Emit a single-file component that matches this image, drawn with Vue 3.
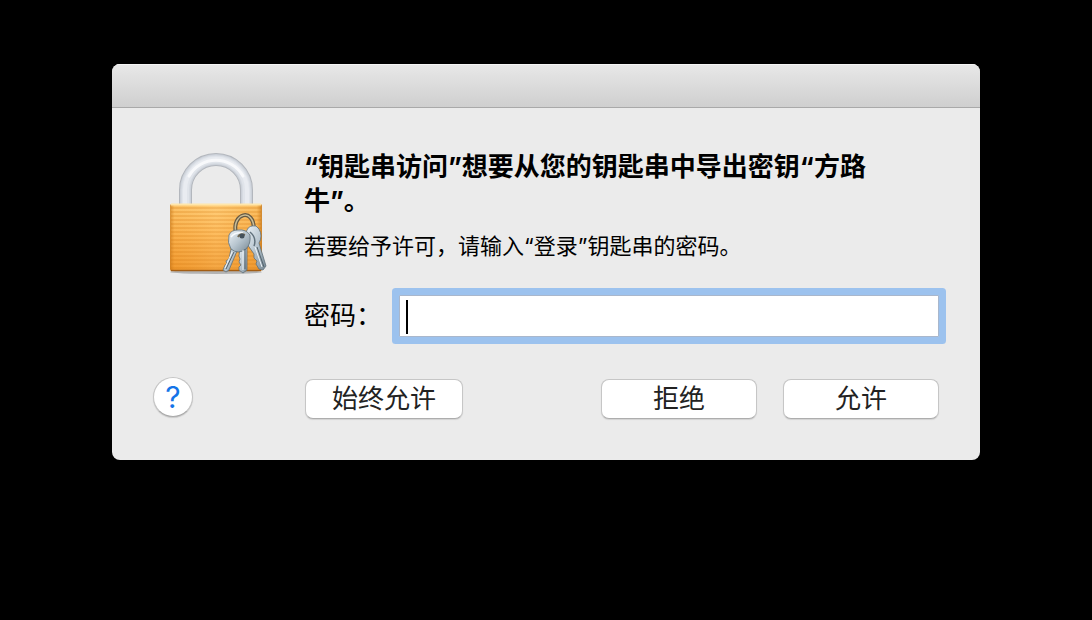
<script setup>
import { ref } from 'vue'

const password = ref('')
const ribs = Array.from({ length: 16 }, (_, i) => 60 + i * 4)
</script>

<template>
  <main class="screen">
    <form class="dialog" role="dialog" aria-labelledby="heading" @submit.prevent>
      <div class="titlebar"></div>
      <div class="content">
        <div class="icon-cell">
          <svg class="lock" viewBox="0 2 106 128" aria-hidden="true">
            <defs>
              <linearGradient id="brass" x1="0" x2="0" y1="0" y2="1">
                <stop offset="0" stop-color="#ffcb73" />
                <stop offset="0.45" stop-color="#fdb653" />
                <stop offset="1" stop-color="#f29b31" />
              </linearGradient>
              <linearGradient id="sides" x1="0" x2="1" y1="0" y2="0">
                <stop offset="0" stop-color="#b96a12" stop-opacity="0.6" />
                <stop offset="0.05" stop-color="#e08a20" stop-opacity="0.1" />
                <stop offset="0.5" stop-color="#ffe0a0" stop-opacity="0.15" />
                <stop offset="0.94" stop-color="#e08a20" stop-opacity="0.15" />
                <stop offset="1" stop-color="#b96a12" stop-opacity="0.7" />
              </linearGradient>
              <linearGradient id="silver" x1="0" x2="1" y1="0" y2="1">
                <stop offset="0" stop-color="#eef4f8" />
                <stop offset="0.5" stop-color="#b7c5cf" />
                <stop offset="1" stop-color="#768793" />
              </linearGradient>
            </defs>
            <ellipse cx="53" cy="124" rx="46" ry="2" fill="#8d8d8d" opacity="0.6" />
            <g fill="none">
              <path d="M22.500 58V42a30.500 30.500 0 0 1 61 0v16" stroke="#b3b7bd" stroke-width="13" />
              <path d="M22.500 58V42a30.500 30.500 0 0 1 61 0v16" stroke="#ccd1d9" stroke-width="11" />
              <path d="M22.500 58V42a30.500 30.500 0 0 1 61 0v16" stroke="#d6dbe2" stroke-width="9" />
              <path d="M22.500 58V42a30.500 30.500 0 0 1 61 0v16" stroke="#e0e4ea" stroke-width="7" />
              <path d="M22 58V42a31 31 0 0 1 62 0v16" stroke="#e9ecf1" stroke-width="4" />
              <path d="M26 28a31 31 0 0 1 54 0" stroke="#f8f9fb" stroke-width="3" stroke-linecap="round" />
            </g>
            <rect x="7" y="56" width="92" height="67" rx="2" fill="url(#brass)" />
            <path v-for="y in ribs" :key="y" :d="`M8 ${y}h90`" stroke="#d97e17" stroke-width="1" opacity="0.55" />
            <rect x="7" y="56" width="92" height="67" rx="2" fill="url(#sides)" />
            <path d="M8 56.500h90" stroke="#ffe6aa" stroke-width="2" />
            <path d="M8 122.500h90" stroke="#a35d13" stroke-width="1.500" />
            <g fill="none">
              <path d="M73 85C68 66 91 58 91 82" stroke="#675a43" stroke-width="4" />
              <path d="M73 85C68 66 91 58 91 82" stroke="#c9bd97" stroke-width="1.500" />
            </g>
            <g stroke="#60707a" stroke-width="0.800" stroke-linejoin="round" fill="url(#silver)">
              <path d="M84 82q2-5 9-4l3 3q4 7 0 14l7 23-3 4-4-1-3-5 1-3-3-3v-4l-7-10q-4-7 0-14z" />
              <path d="M77 99l7-1v24l-4 3-4-3v-3l2-2-2-3 1-3-1-3z" />
              <path d="M68 101l6 2-8 19-3 2-3-2 2-5 2-1-1-3 3-2z" />
              <path d="M66 87q2-5 9-5 8-1 12 5 1 9-4 14-8 6-15 0-4-6-2-14z" />
            </g>
            <g fill="none">
              <path d="M82 101v20M71 104l-8 17M94 99l7 20" stroke="#52616a" stroke-width="1" />
              <path d="M80 102v20M69 104l-7 16M92 99l7 20" stroke="#f0f5f8" stroke-width="1" />
              <path d="M68 89q4-5 12-4" stroke="#f8fbfd" stroke-width="1.500" />
              <path d="M87 84q7 6 4 14" stroke="#61717c" stroke-width="1.500" />
              <path d="M75 89q2-4 7-2" stroke="#706855" stroke-width="2" />
            </g>
            <circle cx="79" cy="88" r="2.500" fill="#43515b" />
          </svg>
        </div>

        <div class="message">
          <h1 id="heading">“钥匙串访问”想要从您的钥匙串中导出密钥“方路牛”。</h1>
          <p>若要给予许可，请输入“登录”钥匙串的密码。</p>
          <div class="field">
            <label for="password">密码：</label>
            <div class="input-wrap">
              <input id="password" v-model="password" type="password" autocomplete="off" />
              <span v-if="!password" class="caret"></span>
            </div>
          </div>
        </div>

        <div class="help-cell">
          <button class="help" type="button" aria-label="?">?</button>
        </div>
        <div class="actions">
          <button class="push always" type="button">始终允许</button>
          <button class="push" type="button">拒绝</button>
          <button class="push" type="submit">允许</button>
        </div>
      </div>
    </form>
  </main>
</template>

<style>
body {
  margin: 0;
  background: #000;
}
</style>

<style scoped>
.screen {
  box-sizing: border-box;
  min-height: 100vh;
  padding: 64px 112px;
  background: #000;
  color: #000;
  font-family: Inter, "Noto Sans CJK SC", sans-serif;
}
.dialog {
  overflow: hidden;
  border-radius: 8px;
  background: #ebebeb;
}
.titlebar {
  box-sizing: border-box;
  height: 44px;
  border-bottom: 1px solid #a9a9a9;
  background: linear-gradient(#e8e8e8, #cfcfcf);
  box-shadow: inset 0 1px #f5f5f5;
}
.content {
  display: grid;
  grid-template-columns: 151px 1fr;
  row-gap: 40px;
  padding: 42px 41px 41px;
}
.icon-cell {
  padding-left: 10px;
}
.lock {
  display: block;
  width: 106px;
  height: 128px;
}
h1 {
  margin: 0;
  padding-right: 16px;
  font-size: 26px;
  font-weight: 700;
  line-height: 34px;
}
p {
  margin: 12px 0 33px;
  font-size: 22px;
  line-height: 32px;
}
.field {
  display: flex;
  align-items: center;
}
label {
  width: 95px;
  font-size: 26px;
  line-height: 42px;
  white-space: nowrap;
}
.input-wrap {
  position: relative;
  flex: 1;
}
input {
  display: block;
  box-sizing: border-box;
  width: 100%;
  height: 42px;
  padding: 0 7px;
  border: 1px solid #a9b7cc;
  outline: none;
  background: #fff;
  box-shadow: 0 0 0 7px #9cc2ee;
  border-radius: 1px;
  font: inherit;
  font-size: 26px;
}
.caret {
  position: absolute;
  top: 5px;
  left: 7px;
  width: 2px;
  height: 34px;
  background: #000;
  pointer-events: none;
}
.help-cell {
  display: flex;
  align-items: flex-start;
}
.help {
  width: 40px;
  height: 40px;
  padding: 0;
  border: 1px solid #c4c4c4;
  border-bottom-color: #aaa;
  border-radius: 50%;
  background: #fff;
  box-shadow: 0 1px 1px #c8c8c8;
  color: #1474e8;
  font-family: Inter, sans-serif;
  font-size: 30px;
  font-weight: 400;
  line-height: 36px;
}
.actions {
  display: flex;
  gap: 26px;
  padding: 2px 0 0 1px;
}
.push {
  box-sizing: border-box;
  width: 156px;
  height: 40px;
  padding: 0;
  border: 1px solid #c6c6c6;
  border-bottom-color: #adadad;
  border-radius: 8px;
  background: #fff;
  box-shadow: 0 1px 1px #d2d2d2;
  color: #222;
  font-family: inherit;
  font-size: 26px;
  line-height: 36px;
}
.always {
  width: 158px;
  margin-right: auto;
}
</style>
